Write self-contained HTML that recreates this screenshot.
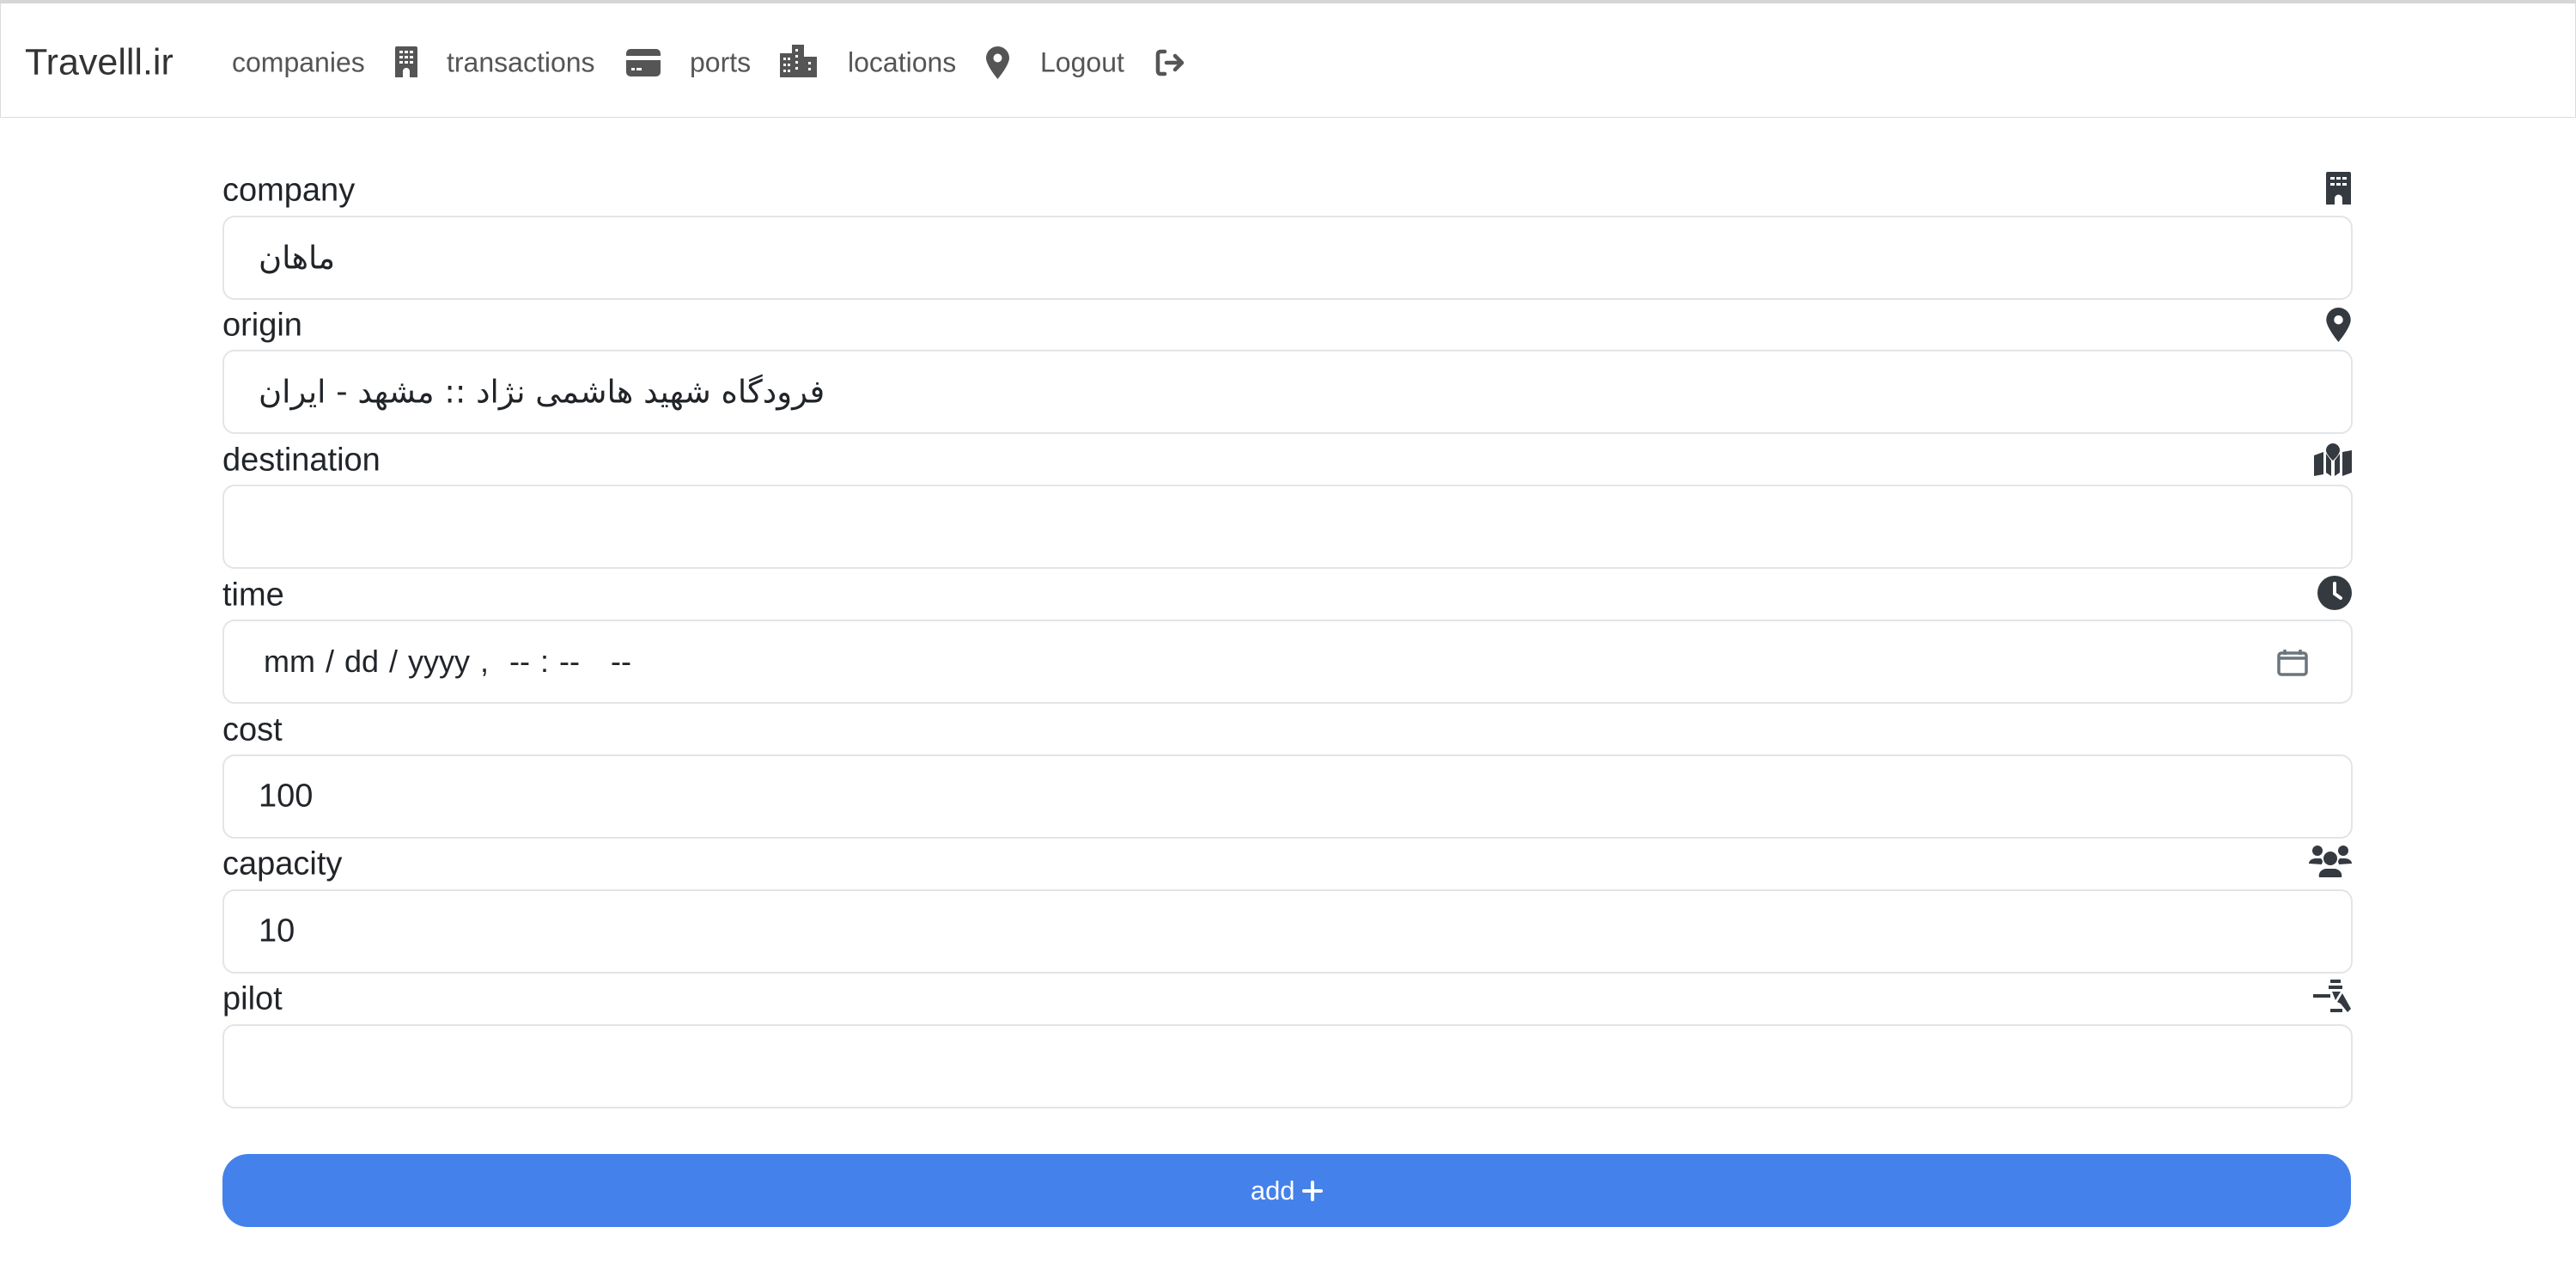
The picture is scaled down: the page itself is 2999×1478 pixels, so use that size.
<!DOCTYPE html>
<html><head><meta charset="utf-8"><style>
html,body{margin:0;padding:0;background:#fff;width:2999px;height:1478px;overflow:hidden;font-family:"Liberation Sans","Noto Sans CJK SC",sans-serif;color:#212529}
.top{position:absolute;left:0;top:0;width:2999px;height:4px;background:#d6d6d6}
.nav{position:absolute;left:0;top:4px;width:2997px;height:132px;border:1px solid #dcdcdc;border-top:none;background:#fff}
.a{position:absolute;top:73px;transform:translateY(-50%);font-size:32px;color:#555;white-space:nowrap}
.brand{font-size:43px;color:#333}
.ic{position:absolute;fill:#555}
.lbl{position:absolute;left:259px;font-size:38px;transform:translateY(-50%)}
.in{position:absolute;left:259px;width:2476px;height:94px;border:2px solid #e2e5e8;border-radius:14px;box-sizing:content-box}
.val{position:absolute;left:40px;top:50%;transform:translateY(-50%);font-size:38px;white-space:nowrap}
.fi{position:absolute;fill:#343a40}
.btn{position:absolute;left:259px;top:1343px;width:2478px;height:85px;background:#4481eb;border-radius:30px;color:#fff;font-size:31px;display:flex;align-items:center;justify-content:center}
</style></head><body>
<div class="top"></div>
<div class="nav"></div>
<span class="a brand" style="left:29px">Travelll.ir</span>
<span class="a" style="left:270px">companies</span>
<svg class="ic" style="left:460px;top:54px" width="26" height="36" viewBox="0 0 26 36"><path d="M2 0h22a2 2 0 0 1 2 2v34h-9v-7a4 4 0 0 0-8 0v7H0V2a2 2 0 0 1 2-2z"/><g fill="#fff"><rect x="5" y="5" width="4" height="3"/><rect x="11" y="5" width="4" height="3"/><rect x="17" y="5" width="4" height="3"/><rect x="5" y="11" width="4" height="3"/><rect x="11" y="11" width="4" height="3"/><rect x="17" y="11" width="4" height="3"/><rect x="5" y="17" width="4" height="3"/><rect x="11" y="17" width="4" height="3"/><rect x="17" y="17" width="4" height="3"/></g></svg>
<span class="a" style="left:520px">transactions</span>
<svg class="ic" style="left:729px;top:57px" width="40" height="32" viewBox="0 0 40 32"><path d="M5 0h30a5 5 0 0 1 5 5v3H0V5a5 5 0 0 1 5-5zM0 13h40v14a5 5 0 0 1-5 5H5a5 5 0 0 1-5-5z"/><rect x="6" y="22" width="4" height="3" fill="#fff"/><rect x="12" y="22" width="6" height="3" fill="#fff"/></svg>
<span class="a" style="left:803px">ports</span>
<svg class="ic" style="left:908px;top:52px" width="43" height="38" viewBox="0 0 43 38"><path d="M0 10h14V0h14v14h15v24H0z"/><g fill="#fff"><rect x="4" y="15" width="3" height="3"/><rect x="9" y="15" width="3" height="3"/><rect x="4" y="22" width="3" height="3"/><rect x="9" y="22" width="3" height="3"/><rect x="4" y="29" width="3" height="3"/><rect x="9" y="29" width="3" height="3"/><rect x="18" y="5" width="3" height="3"/><rect x="18" y="12" width="3" height="3"/><rect x="18" y="19" width="3" height="3"/><rect x="18" y="26" width="3" height="3"/><rect x="33" y="20" width="3" height="3"/><rect x="33" y="27" width="3" height="3"/></g></svg>
<span class="a" style="left:987px">locations</span>
<svg class="ic" style="left:1148px;top:54px" width="27" height="38" viewBox="0 0 27 38"><path d="M13.5 0A13.5 13.5 0 0 0 0 13.5C0 22 13.5 38 13.5 38S27 22 27 13.5A13.5 13.5 0 0 0 13.5 0z"/><circle cx="13.5" cy="13.5" r="5" fill="#fff"/></svg>
<span class="a" style="left:1211px">Logout</span>
<svg style="position:absolute;left:1345px;top:57px" width="35" height="32" viewBox="0 0 35 32" fill="none" stroke="#555" stroke-width="4.5" stroke-linecap="round" stroke-linejoin="round"><path d="M11 3H6a3 3 0 0 0-3 3v20a3 3 0 0 0 3 3h5"/><path d="M13 16h18M23 8l8 8-8 8"/></svg>

<span class="lbl" style="top:222px">company</span>
<div class="in" style="top:251px"><span class="val" style="font-family:'DejaVu Sans',sans-serif;font-size:37px" dir="rtl">ماهان</span></div>
<svg class="fi" style="left:2708px;top:200px" width="29" height="38" viewBox="0 0 29 38"><path d="M2 0h25a2 2 0 0 1 2 2v36h-10v-7a4.5 4.5 0 0 0-9 0v7H0V2a2 2 0 0 1 2-2z"/><g fill="#fff"><rect x="5" y="6" width="5" height="3"/><rect x="12" y="6" width="5" height="3"/><rect x="19" y="6" width="5" height="3"/><rect x="5" y="13" width="5" height="3"/><rect x="12" y="13" width="5" height="3"/><rect x="19" y="13" width="5" height="3"/></g></svg>

<span class="lbl" style="top:379px">origin</span>
<div class="in" style="top:407px"><span class="val" style="font-family:'DejaVu Sans',sans-serif;font-size:37px" dir="rtl">فرودگاه شهید هاشمی نژاد :: مشهد - ایران</span></div>
<svg class="fi" style="left:2708px;top:358px" width="29" height="40" viewBox="0 0 27 38"><path d="M13.5 0A13.5 13.5 0 0 0 0 13.5C0 22 13.5 38 13.5 38S27 22 27 13.5A13.5 13.5 0 0 0 13.5 0z"/><circle cx="13.5" cy="13.5" r="5" fill="#fff"/></svg>

<span class="lbl" style="top:536px">destination</span>
<div class="in" style="top:564px"></div>
<svg class="fi" style="left:2694px;top:516px" width="44" height="38" viewBox="0 0 44 38"><path d="M0 14l11-4v26L0 38zM33 10l11-2v26l-11 4zM14 12l6 8v18l-6-4zM30 12l-6 8v18l6-4z"/><path d="M22 0a8 8 0 0 0-8 8c0 5 8 12 8 12s8-7 8-12a8 8 0 0 0-8-8z"/></svg>

<span class="lbl" style="top:693px">time</span>
<div class="in" style="top:721px"><span class="val" style="left:46px;font-size:36px;word-spacing:2px">mm / dd / yyyy ,&nbsp; -- : --&nbsp;&nbsp; --</span>
<svg style="position:absolute;right:50px;top:32px" width="36" height="32" viewBox="0 0 36 32" fill="none" stroke="#6c757d" stroke-width="3.5"><rect x="2" y="5" width="32" height="25" rx="3"/><path d="M2 11h32M9 1v6M27 1v6"/></svg></div>
<svg class="fi" style="left:2698px;top:670px" width="40" height="40" viewBox="0 0 40 40"><circle cx="20" cy="20" r="20"/><path d="M20 9v12l7 5" stroke="#fff" stroke-width="4" fill="none" stroke-linecap="round"/></svg>

<span class="lbl" style="top:850px">cost</span>
<div class="in" style="top:878px"><span class="val">100</span></div>

<span class="lbl" style="top:1006px">capacity</span>
<div class="in" style="top:1035px"><span class="val">10</span></div>
<svg class="fi" style="left:2688px;top:983px" width="50" height="38" viewBox="0 0 50 38"><circle cx="10" cy="7" r="6"/><circle cx="40" cy="7" r="6"/><circle cx="25" cy="16" r="8"/><path d="M0 22a8 6 0 0 1 8-6h6a6 6 0 0 1 2 4 10 10 0 0 0-1 3zM50 22a8 6 0 0 0-8-6h-6a6 6 0 0 0-2 4 10 10 0 0 1 1 3zM12 38a9 8 0 0 1 9-10h8a9 8 0 0 1 9 10z"/></svg>

<span class="lbl" style="top:1163px">pilot</span>
<div class="in" style="top:1192px"></div>
<svg class="fi" style="left:2693px;top:1140px" width="44" height="40" viewBox="0 0 44 40"><rect x="20" y="0" width="12" height="4"/><rect x="18" y="7" width="16" height="4"/><rect x="0" y="17" width="20" height="4"/><path d="M22 14h10l-6 10zM28 26l6-10 10 18-4 4-8-10z"/><rect x="20" y="34" width="14" height="4"/></svg>

<div class="btn">add&nbsp;<svg width="24" height="24" viewBox="0 0 24 24" stroke="#fff" stroke-width="4" stroke-linecap="round"><path d="M12 2v20M2 12h20"/></svg></div>
</body></html>
